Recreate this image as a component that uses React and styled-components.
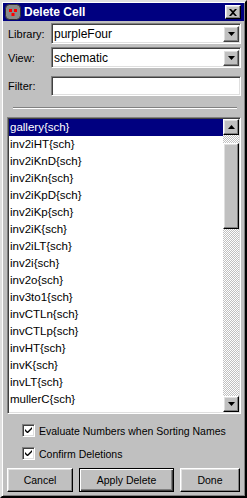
import React from 'react';
import styled, { createGlobalStyle, css } from 'styled-components';

const cells = [
	'gallery{sch}',
	'inv2iHT{sch}',
	'inv2iKnD{sch}',
	'inv2iKn{sch}',
	'inv2iKpD{sch}',
	'inv2iKp{sch}',
	'inv2iK{sch}',
	'inv2iLT{sch}',
	'inv2i{sch}',
	'inv2o{sch}',
	'inv3to1{sch}',
	'invCTLn{sch}',
	'invCTLp{sch}',
	'invHT{sch}',
	'invK{sch}',
	'invLT{sch}',
	'mullerC{sch}',
	'muxNand{sch}',
];

const Arrow = ({ up }) => (
	<svg width="7" height="4" viewBox="0 0 7 4">
		<path d={up ? 'M3.5 0 L7 4 L0 4 Z' : 'M0 0 L7 0 L3.5 4 Z'} fill="#000" />
	</svg>
);

const Check = () => (
	<svg width="7" height="7" viewBox="0 0 7 7">
		<path d="M0 2 L0 4 L2 6 L3 6 L7 2 L7 0 L2.5 4.5 Z" fill="#000" />
	</svg>
);

const App = () => {
	return (
		<>
			<GlobalStyle />
			<Window>
				<TitleBar>
					<TitleIcon>
						<svg width="16" height="16" viewBox="0 0 16 16">
							<rect x="0.5" y="0.5" width="15" height="15" rx="4" fill="#8a8a8a" stroke="#303030" />
							<rect x="4" y="5" width="3" height="3" fill="#ff0000" />
							<rect x="9" y="5" width="3" height="3" fill="#ff0000" />
							<rect x="6.5" y="9" width="3" height="3" fill="#ff0000" />
						</svg>
					</TitleIcon>
					<Title>Delete Cell</Title>
					<CloseButton>
						<svg width="8" height="7" viewBox="0 0 8 7">
							<path d="M0 0 L2 0 L4 2 L6 0 L8 0 L5 3.5 L8 7 L6 7 L4 5 L2 7 L0 7 L3 3.5 Z" fill="#000" />
						</svg>
					</CloseButton>
				</TitleBar>
				<Content>
					<FormRow>
						<Label>Library:</Label>
						<Combo>
							<ComboText>purpleFour</ComboText>
							<DropButton>
								<Arrow />
							</DropButton>
						</Combo>
					</FormRow>
					<FormRow $top={3}>
						<Label>View:</Label>
						<Combo>
							<ComboText>schematic</ComboText>
							<DropButton>
								<Arrow />
							</DropButton>
						</Combo>
					</FormRow>
					<FormRow $top={8}>
						<Label>Filter:</Label>
						<TextField />
					</FormRow>
					<Separator />
					<ListBox>
						<ListItems>
							{cells.map((name, i) => (
								<ListItem key={name} $selected={i === 0}>
									{name}
								</ListItem>
							))}
						</ListItems>
						<ScrollBar>
							<ScrollButton>
								<Arrow up />
							</ScrollButton>
							<Track $h={8} />
							<Thumb />
							<Track $grow />
							<ScrollButton>
								<Arrow />
							</ScrollButton>
						</ScrollBar>
					</ListBox>
					<CheckRow $top={10}>
						<CheckBox>
							<Check />
						</CheckBox>
						<CheckLabel>Evaluate Numbers when Sorting Names</CheckLabel>
					</CheckRow>
					<CheckRow $top={10}>
						<CheckBox>
							<Check />
						</CheckBox>
						<CheckLabel>Confirm Deletions</CheckLabel>
					</CheckRow>
					<ButtonRow>
						<Button $w={66}>Cancel</Button>
						<Button $w={95} $default>
							Apply Delete
						</Button>
						<Button $w={60}>Done</Button>
					</ButtonRow>
				</Content>
			</Window>
		</>
	);
};

export default App;

const GlobalStyle = createGlobalStyle`
	body {
		margin: 0;
		background: #c0c0c0;
		font-family: "Liberation Sans", Arial, sans-serif;
	}
`;

const raised = css`
	border: 1px solid;
	border-color: #fff #000 #000 #fff;
	box-shadow: inset -1px -1px 0 #808080, inset 1px 1px 0 #dfdfdf;
`;

const sunken = css`
	border: 1px solid;
	border-color: #808080 #fff #fff #808080;
	box-shadow: inset 1px 1px 0 #404040, inset -1px -1px 0 #dfdfdf;
`;

const Window = styled.div`
	box-sizing: border-box;
	width: 247px;
	height: 498px;
	padding: 1px;
	border: 2px solid;
	border-color: #dfdfdf #000 #000 #dfdfdf;
	box-shadow: inset 1px 1px 0 #fff, inset -1px -1px 0 #808080;
	background: #c0c0c0;
	display: flex;
	flex-direction: column;
`;

const TitleBar = styled.div`
	height: 18px;
	background: #000080;
	display: flex;
	align-items: center;
	padding: 0 3px 0 2px;
`;

const TitleIcon = styled.div`
	width: 16px;
	height: 16px;
	display: flex;
`;

const Title = styled.div`
	flex: 1;
	margin-left: 3px;
	color: #fff;
	font-weight: bold;
	font-size: 12px;
`;

const CloseButton = styled.div`
	box-sizing: border-box;
	width: 16px;
	height: 14px;
	${raised};
	background: #c0c0c0;
	display: flex;
	align-items: center;
	justify-content: center;
`;

const Content = styled.div`
	flex: 1;
	display: flex;
	flex-direction: column;
	padding: 2px 3px 0 4px;
`;

const FormRow = styled.div`
	display: flex;
	align-items: center;
	margin-top: ${(p) => p.$top || 0}px;
`;

const Label = styled.div`
	width: 44px;
	padding-left: 1px;
	box-sizing: border-box;
	font-size: 11px;
	color: #000;
`;

const Combo = styled.div`
	box-sizing: border-box;
	flex: 1;
	height: 21px;
	${sunken};
	background: #fff;
	display: flex;
	align-items: center;
	padding: 0 1px 0 2px;
`;

const ComboText = styled.div`
	flex: 1;
	font-size: 12px;
	color: #000;
`;

const DropButton = styled.div`
	box-sizing: border-box;
	width: 16px;
	height: 16px;
	${raised};
	border-color: #fff #404040 #404040 #fff;
	background: #c0c0c0;
	display: flex;
	align-items: center;
	justify-content: center;
`;

const TextField = styled.div`
	box-sizing: border-box;
	flex: 1;
	height: 20px;
	${sunken};
	background: #fff;
`;

const Separator = styled.div`
	margin: 11px 4px 8px 6px;
	height: 0;
	border-top: 1px solid #808080;
	border-bottom: 1px solid #fff;
`;

const ListBox = styled.div`
	box-sizing: border-box;
	height: 297px;
	${sunken};
	padding: 1px;
	background: #fff;
	display: flex;
	overflow: hidden;
`;

const ListItems = styled.div`
	flex: 1;
	overflow: hidden;
`;

const ListItem = styled.div`
	height: 17px;
	line-height: 17px;
	padding-left: 1px;
	font-size: 11.5px;
	white-space: nowrap;
	color: ${(p) => (p.$selected ? '#fff' : '#000')};
	background: ${(p) => (p.$selected ? '#000080' : 'transparent')};
`;

const ScrollBar = styled.div`
	width: 16px;
	display: flex;
	flex-direction: column;
`;

const ScrollButton = styled.div`
	box-sizing: border-box;
	width: 16px;
	height: 16px;
	${raised};
	background: #c0c0c0;
	display: flex;
	align-items: center;
	justify-content: center;
`;

const Track = styled.div`
	height: ${(p) => (p.$h ? `${p.$h}px` : 'auto')};
	flex: ${(p) => (p.$grow ? 1 : 'none')};
	background: repeating-conic-gradient(#c0c0c0 0% 25%, #fff 0% 50%) 0 0 / 2px 2px;
`;

const Thumb = styled.div`
	box-sizing: border-box;
	height: 86px;
	${raised};
	background: #c0c0c0;
`;

const CheckRow = styled.div`
	display: flex;
	align-items: center;
	margin-top: ${(p) => p.$top}px;
	padding-left: 15px;
	height: 13px;
`;

const CheckBox = styled.div`
	box-sizing: border-box;
	width: 13px;
	height: 13px;
	${sunken};
	background: #fff;
	display: flex;
	align-items: center;
	justify-content: center;
`;

const CheckLabel = styled.div`
	margin-left: 4px;
	font-size: 10.5px;
	color: #000;
`;

const ButtonRow = styled.div`
	display: flex;
	justify-content: space-between;
	margin-top: 8px;
	padding-right: 1px;
`;

const Button = styled.div`
	box-sizing: border-box;
	width: ${(p) => p.$w}px;
	height: 24px;
	${raised};
	background: #c0c0c0;
	font-size: 10.5px;
	color: #000;
	display: flex;
	align-items: center;
	justify-content: center;
	${(p) =>
		p.$default &&
		css`
			border: 1px solid #000;
			box-shadow: inset 1px 1px 0 #fff, inset -1px -1px 0 #404040, inset -2px -2px 0 #808080;
		`}
`;
